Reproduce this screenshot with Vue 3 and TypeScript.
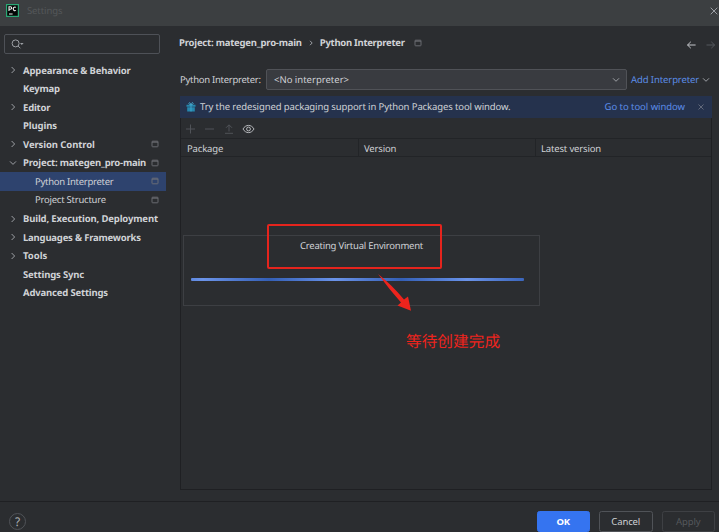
<script setup lang="ts">
interface TreeItem {
  label: string
  arrow?: 'right' | 'down'
  child?: boolean
  badge?: boolean
  selected?: boolean
  spacing: number
}

const items: TreeItem[] = [
  { label: 'Appearance & Behavior', arrow: 'right', spacing: -0.15 },
  { label: 'Keymap', spacing: -0.25 },
  { label: 'Editor', arrow: 'right', spacing: -0.18 },
  { label: 'Plugins', spacing: -0.1 },
  { label: 'Version Control', arrow: 'right', badge: true, spacing: -0.1 },
  { label: 'Project: mategen_pro-main', arrow: 'down', badge: true, spacing: -0.2 },
  { label: 'Python Interpreter', child: true, badge: true, selected: true, spacing: -0.28 },
  { label: 'Project Structure', child: true, badge: true, spacing: -0.24 },
  { label: 'Build, Execution, Deployment', arrow: 'right', spacing: -0.14 },
  { label: 'Languages & Frameworks', arrow: 'right', spacing: -0.2 },
  { label: 'Tools', arrow: 'right', spacing: 0 },
  { label: 'Settings Sync', spacing: -0.17 },
  { label: 'Advanced Settings', spacing: -0.17 },
]
</script>

<template>
  <div class="window">
    <header class="titlebar">
      <svg class="logo" viewBox="0 0 13 13">
        <rect x=".6" y=".6" width="11.8" height="11.8" fill="#050807" stroke="#2aa876" stroke-width="1.2" />
        <path d="M3 7V2.8h1.4a1.2 1.2 0 0 1 0 2.5H3M10 3.4a1.8 1.8 0 1 0 0 3M3 10h3.6" fill="none" stroke="#f4f4f4" stroke-width="1.1" />
      </svg>
      <span class="title">Settings</span>
      <svg class="close" viewBox="0 0 8 8"><path d="M.7.7l6.6 6.6M7.3.7L.7 7.3" /></svg>
    </header>

    <div class="body">
      <nav class="sidebar">
        <div class="search">
          <svg viewBox="0 0 14 10">
            <circle cx="4.6" cy="4.4" r="3.5" />
            <path d="M7.1 7l2.3 2.3" />
            <path class="solid" d="M9 4.1h3.6l-1.8 2z" />
          </svg>
        </div>
        <ul class="tree">
          <li v-for="item in items" :key="item.label" :class="{ child: item.child, selected: item.selected }">
            <svg class="arrow" viewBox="0 0 8 8">
              <path v-if="item.arrow === 'right'" d="M2.6 1l3 3-3 3" />
              <path v-else-if="item.arrow === 'down'" d="M1 2.4l3 3 3-3" />
            </svg>
            <span class="label" :style="{ letterSpacing: item.spacing + 'px' }">{{ item.label }}</span>
            <svg v-if="item.badge" class="badge" viewBox="0 0 8 8">
              <rect x="1" y="1.2" width="6" height="5.6" rx=".6" /><path d="M1 2.2h6" />
            </svg>
          </li>
        </ul>
      </nav>

      <main class="content">
        <div class="crumbs">
          <span class="project">Project: mategen_pro-main</span>
          <svg class="sep" viewBox="0 0 6 8"><path d="M2 1.8L4.2 4 2 6.2" /></svg>
          <span class="page">Python Interpreter</span>
          <svg class="badge" viewBox="0 0 8 8"><rect x="1" y="1.2" width="6" height="5.6" rx=".6" /><path d="M1 2.2h6" /></svg>
          <svg class="nav" viewBox="0 0 30 10">
            <path d="M9.6 5H1.5M4.8 1.8L1.5 5l3.3 3.2" />
            <path class="off" d="M20.5 5h8.1M25.3 1.8L28.6 5l-3.3 3.2" />
          </svg>
        </div>

        <div class="interp">
          <span class="field-label">Python Interpreter:</span>
          <div class="select">
            <span>&lt;No interpreter&gt;</span>
            <svg viewBox="0 0 8 8"><path d="M1 2.3l3 3 3-3" /></svg>
          </div>
          <a class="add">Add Interpreter</a>
          <svg class="add-arrow" viewBox="0 0 8 8"><path d="M1 2.3l3 3 3-3" /></svg>
        </div>

        <div class="banner">
          <svg class="gift" viewBox="0 0 10 10">
            <path d="M.5 2.7h9v2h-9zM1.2 5.3h7.6v4.2H1.2z" fill="#2687ae" />
            <path d="M5 2.8v6.7M5 2.6C3.5 2.8 2.4 2 3 1s1.7 0 2 1.6C5.3 1 6.3 0 7 1s-.5 1.8-2 1.6" fill="none" stroke="#48b0d5" stroke-width=".8" />
          </svg>
          <span class="message">Try the redesigned packaging support in Python Packages tool window.</span>
          <a class="goto">Go to tool window</a>
          <svg class="dismiss" viewBox="0 0 8 8"><path d="M1.5 1.5l5 5M6.5 1.5l-5 5" /></svg>
        </div>

        <section class="packages">
          <div class="tools">
            <svg viewBox="0 0 74 12">
              <g class="off">
                <path d="M1 6h9M5.5 1.5v9M20 6h9M44 8.5V2M41 4.8l3-3 3 3M40 10.3h8" />
              </g>
              <path class="eye" d="M58 6c2.6-4.8 8.4-4.8 11 0-2.6 4.8-8.4 4.8-11 0z" />
              <circle class="eye" cx="63.5" cy="6" r="1.9" />
            </svg>
          </div>
          <div class="columns"><span>Package</span><span>Version</span><span>Latest version</span></div>
          <div class="table-body">
            <div class="progress">
              <span>Creating Virtual Environment</span>
              <div class="bar"></div>
            </div>
          </div>
        </section>
      </main>
    </div>

    <footer class="footer">
      <span class="help">?</span>
      <button class="primary">OK</button>
      <button>Cancel</button>
      <button class="disabled">Apply</button>
    </footer>

    <div class="mark-box"></div>
    <svg class="mark-arrow" viewBox="0 0 36 40">
      <path d="M1 0Q15 11 27 25.5L31 22.5 34 36.8 20.5 31.5 24 28.5Q12 15 1 0z" />
    </svg>
    <span class="mark-text">等待创建完成</span>
  </div>
</template>

<style>
body { margin: 0; background: #2b2d30; overflow: hidden; }
</style>

<style scoped>
* { box-sizing: border-box; }
svg { display: block; flex: none; fill: none; stroke: #9da0a5; stroke-width: 1; }
.window {
  position: relative; width: 719px; height: 532px; overflow: hidden;
  display: flex; flex-direction: column; background: #2b2d30; color: #d0d2d6;
  font: 9.5px/14px "Noto Sans", "Noto Sans CJK SC", sans-serif; white-space: nowrap;
  text-rendering: geometricPrecision;
}
.titlebar { height: 26px; flex: none; display: flex; align-items: center; padding: 0 1px 5px 6px; background: #3c3f41; }
.logo { width: 13px; height: 13px; stroke: none; }
.title { margin-left: 8px; color: #55585a; letter-spacing: -.1px; }
.close { width: 8px; height: 8px; margin-left: auto; }
.body { flex: 1; min-height: 0; display: flex; }
.sidebar { width: 166px; flex: none; padding-top: 8px; }
.search { width: 156px; height: 20px; margin-left: 4px; padding-left: 6px; display: flex; align-items: center; border: 1px solid #4e5157; border-radius: 2px; }
.search svg { width: 14px; height: 10px; }
.search .solid { fill: #9da0a5; stroke: none; }
.tree { list-style: none; margin: 7px 0 0; padding: 0; }
.tree li { height: 18.54px; display: flex; align-items: center; padding: 0 7px 0 9px; font-weight: 700; }
.tree .child { font-weight: 400; }
.tree .child .label { margin-left: 18px; }
.tree .selected { background: #2e436e; }
.arrow { width: 8px; height: 8px; }
.label { margin-left: 6px; padding-top: 1px; }
.badge { width: 8px; height: 8px; stroke: #6f7277; stroke-width: .9; }
.tree .badge { margin-left: auto; }
.content { flex: 1; min-width: 0; padding: 10px 7px 0 14px; display: flex; flex-direction: column; }
.crumbs { height: 14px; display: flex; align-items: center; margin-left: -1px; font-weight: 700; margin-right: -4px; }
.project { letter-spacing: -.21px; }
.page { letter-spacing: -.28px; }
.sep { width: 6px; height: 8px; margin: 0 6px; }
.crumbs .badge { margin-left: 9px; }
.nav { width: 30px; height: 10px; margin-left: auto; position: relative; top: 2px; stroke: #c5c7cb; }
.nav .off { stroke: #55585d; }
.interp { height: 21px; margin-top: 19px; display: flex; align-items: center; }
.field-label { width: 86px; letter-spacing: -.28px; }
.select { width: 361px; height: 21px; padding: 1px 6px 0 7px; display: flex; align-items: center; justify-content: space-between; background: #393b40; border: 1px solid #505257; border-radius: 2px; }
.select svg { width: 8px; height: 8px; }
.add { margin-left: 4px; color: #5c8de8; letter-spacing: -.1px; }
.add-arrow { width: 8px; height: 8px; margin-left: auto; margin-right: 2px; }
.banner { height: 22px; margin-top: 6px; padding: 0 7px 0 6px; display: flex; align-items: center; background: #25324d; }
.gift { width: 10px; height: 10px; stroke: none; }
.message { margin-left: 4px; letter-spacing: -.11px; }
.goto { margin-left: auto; color: #5c8de8; letter-spacing: -.05px; }
.dismiss { width: 8px; height: 8px; margin-left: 12px; stroke: #62697a; }
.packages { height: 372px; border: 1px solid #1f2023; border-top: 0; }
.tools { height: 21px; padding: 5px 0 0 4px; border-bottom: 1px solid #222427; }
.tools svg { width: 74px; height: 12px; }
.tools .off { stroke: #505358; }
.tools .eye { stroke: #b7b9bd; }
.columns { height: 18px; display: grid; grid-template-columns: 178px 177px 1fr; border-bottom: 1px solid #222427; line-height: 19px; letter-spacing: -.16px; }
.columns span { padding-left: 5px; border-right: 1px solid #222427; height: 17px; }
.columns span:first-child { padding-left: 6px; }
.columns span:last-child { border: 0; }
.table-body { padding: 78px 0 0 2px; }
.progress { width: 357px; height: 71px; border: 1px solid #3d3f43; padding: 3px 15px 0 7px; }
.progress span { display: block; padding-left: 109px; letter-spacing: -.23px; }
.bar { height: 3px; margin-top: 25px; border-radius: 1px; background: repeating-linear-gradient(90deg, #5f89e0 0, #6b93e8 12px, #345fb5 78px, #5f89e0 132px); }
.footer { height: 31px; flex: none; border-top: 1px solid #1f2023; padding: 9px 4px 0 9px; display: flex; gap: 9px; }
.help { width: 17px; height: 17px; margin: 2px auto 0 0; border: 1px solid #505358; border-radius: 50%; font-size: 12px; line-height: 15px; text-align: center; color: #b0b3b8; }
button { width: 53.5px; height: 21px; padding: 0; border: 1px solid #505358; border-radius: 2.5px; background: transparent; color: #d0d2d6; font: inherit; line-height: 20px; letter-spacing: -.1px; }
.primary { background: #3574f0; border-color: #3574f0; font-weight: 700; color: #fff; }
.disabled { border-color: #3e4044; color: #55585c; }
.mark-box { position: absolute; left: 267px; top: 224px; width: 175px; height: 45px; border: 2px solid #e5241d; border-radius: 2px; }
.mark-arrow { position: absolute; left: 377px; top: 274px; width: 36px; height: 40px; fill: #ed241d; stroke: none; }
.mark-text { position: absolute; left: 406px; top: 329px; color: #ed241d; font: 15.7px/23px "Noto Sans CJK SC", sans-serif; }
</style>
